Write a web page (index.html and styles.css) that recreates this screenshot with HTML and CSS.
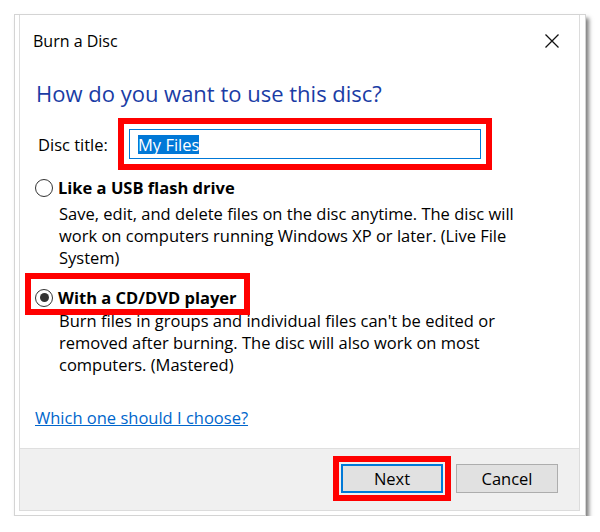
FILE: index.html
```html
<!DOCTYPE html>
<html lang="en">
<head>
<meta charset="UTF-8">
<meta name="viewport" content="width=device-width, initial-scale=1.0">
<title>Burn a Disc</title>
<link rel="stylesheet" href="styles.css">
</head>
<body>
    <div class="frame">
        <div class="dialog">
            <div class="titlebar">
                <span class="title">Burn a Disc</span>
                <svg class="close" width="14" height="14" viewBox="0 0 14 14">
                    <path d="M0.5 0.5 L13.5 13.5 M13.5 0.5 L0.5 13.5" stroke="#111" stroke-width="1.3" fill="none"/>
                </svg>
            </div>
            <div class="content">
                <h1 class="instruction">How do you want to use this disc?</h1>
                <div class="title-row">
                    <label class="field-label" for="discTitle">Disc title:</label>
                    <div class="field mark" id="discTitle"><span class="selected">My Files</span></div>
                </div>
                <div class="option">
                    <div class="radio-label"><span class="radio"></span>Like a USB flash drive</div>
                    <p class="desc">Save, edit, and delete files on the disc anytime. The disc will work on computers running Windows XP or later. (Live File System)</p>
                </div>
                <div class="option">
                    <div class="radio-label boxed"><span class="radio checked"></span>With a CD/DVD player</div>
                    <p class="desc">Burn files in groups and individual files can't be edited or removed after burning. The disc will also work on most computers. (Mastered)</p>
                </div>
                <a class="help" href="#">Which one should I choose?</a>
            </div>
            <div class="footer">
                <button class="btn default mark">Next</button>
                <button class="btn">Cancel</button>
            </div>
        </div>
    </div>
</body>
</html>
```
FILE: styles.css
```css
body {
    margin: 0;
    background-color: #fff;
    font-family: "Open Sans", "Noto Sans", sans-serif;
    font-size: 16.5px;
    color: #000;
}
.frame {
    margin: 14px 0 0 14px;
    width: 572px;
    height: 502px;
    box-sizing: border-box;
    background-color: #fff;
    border: 1px solid #d4d4d4;
    padding: 0 5px 4px 4px;
    box-shadow: 3px 4px 4px rgba(0, 0, 0, 0.5);
}
.dialog {
    height: 100%;
    box-sizing: border-box;
    border: 1px solid #dcdcdc;
    border-top: none;
    display: flex;
    flex-direction: column;
}
.titlebar {
    height: 51px;
    display: flex;
    align-items: center;
    justify-content: space-between;
    padding: 0 20px 0 13px;
}
.title {
    font-size: 16px;
}
.content {
    flex: 1;
    padding: 0 15px;
}
.instruction {
    margin: 13px 0 0 1px;
    font-size: 22px;
    font-weight: normal;
    line-height: 28px;
    color: #1a3ca5;
}
.title-row {
    display: flex;
    align-items: center;
    margin-top: 22px;
}
.field-label {
    width: 91px;
    margin-left: 3px;
}
.field {
    width: 352px;
    height: 30px;
    box-sizing: border-box;
    border: 1px solid #0078d7;
    padding: 0 8px;
    display: flex;
    align-items: center;
}
.selected {
    background-color: #0078d7;
    color: #fff;
    line-height: 19px;
}
.option {
    margin-top: 18px;
}
.option + .option {
    margin-top: 15px;
}
.radio-label {
    display: inline-flex;
    align-items: center;
    gap: 5px;
    font-weight: bold;
    line-height: 22px;
    padding: 0 2px;
    margin-left: -2px;
}
.radio {
    width: 18px;
    height: 18px;
    box-sizing: border-box;
    border: 1px solid #333;
    border-radius: 50%;
    background-color: #fff;
    display: flex;
    align-items: center;
    justify-content: center;
}
.radio.checked::after {
    content: "";
    width: 9px;
    height: 9px;
    border-radius: 50%;
    background-color: #333;
}
.desc {
    margin: 1px 0 0 24px;
    width: 470px;
    line-height: 22px;
}
.help {
    display: inline-block;
    margin-top: 31px;
    color: #0066cc;
    line-height: 22px;
}
.footer {
    height: 62px;
    box-sizing: border-box;
    border-top: 1px solid #dfdfdf;
    background-color: #f0f0f0;
    display: flex;
    justify-content: flex-end;
    align-items: flex-start;
    gap: 13px;
    padding: 15px 21px 0 0;
}
.btn {
    width: 102px;
    height: 29px;
    font-family: inherit;
    font-size: 16.5px;
    background-color: #e1e1e1;
    border: 1px solid #adadad;
    padding: 0;
}
.btn.default {
    border: 2px solid #0078d7;
}
/* red annotation boxes drawn over the screenshot */
.mark {
    outline: 6px solid #ff0000;
    outline-offset: 5px;
}
.btn.mark {
    outline-offset: 2px;
}
.boxed {
    position: relative;
}
.boxed::before {
    content: "";
    position: absolute;
    left: -8px;
    right: -11px;
    top: -14px;
    bottom: -6px;
    border: 6px solid #ff0000;
}
```
